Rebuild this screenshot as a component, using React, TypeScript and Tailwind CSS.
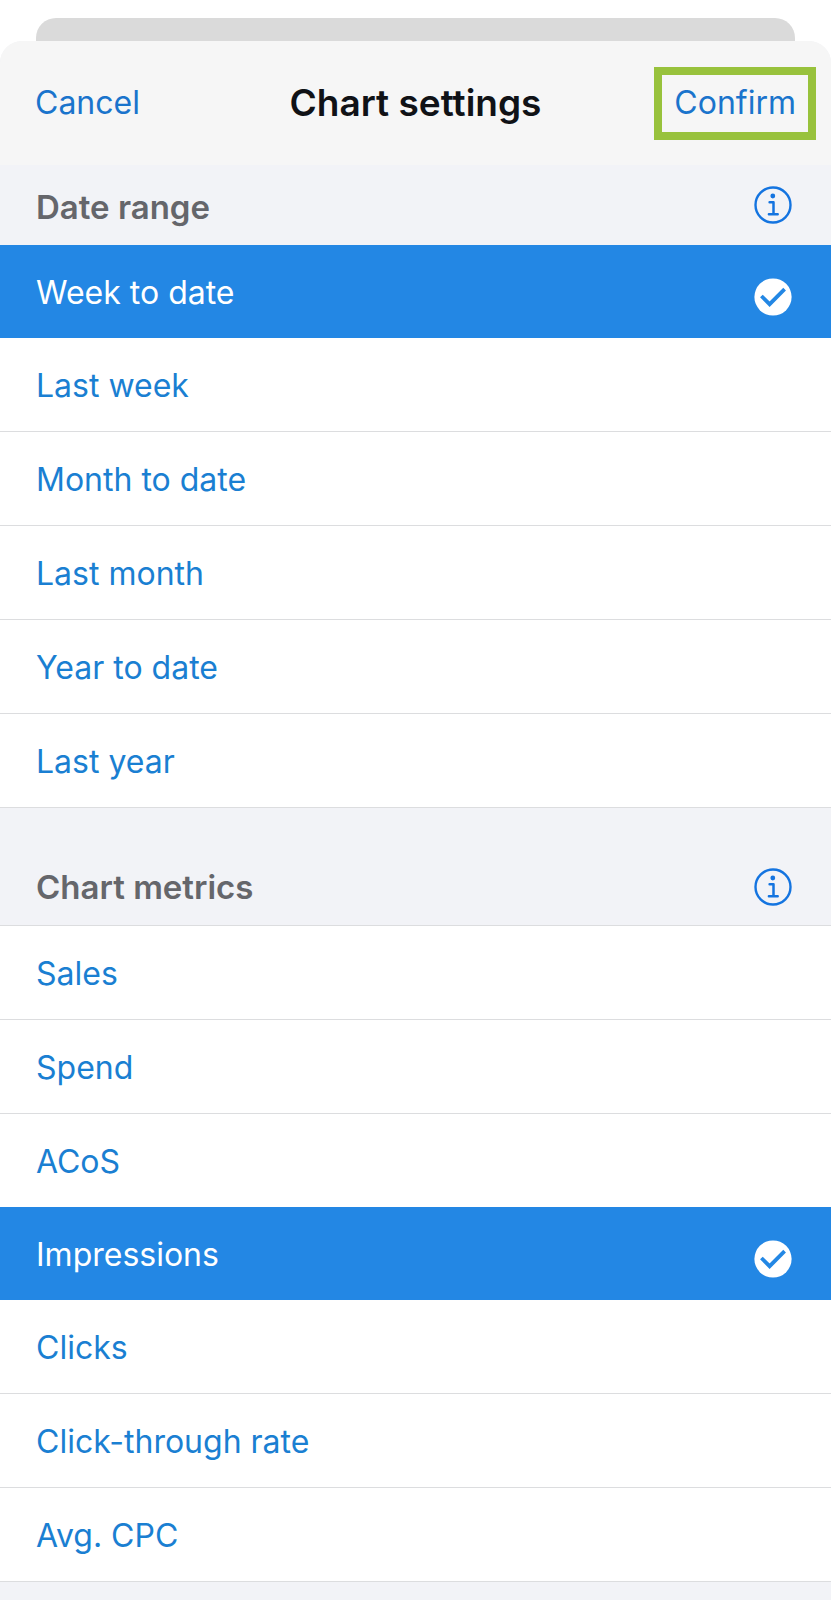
import { useState } from "react";
import clsx from "clsx";

const dateRanges = ["Week to date", "Last week", "Month to date", "Last month", "Year to date", "Last year"];
const metrics = ["Sales", "Spend", "ACoS", "Impressions", "Clicks", "Click-through rate", "Avg. CPC"];

function InfoIcon() {
  return (
    <svg className="size-[38px]" viewBox="0 0 38 38" fill="none" stroke="#1474e0" aria-hidden="true">
      <circle cx="19" cy="19" r="17.5" strokeWidth="2.4" />
      <circle cx="18.8" cy="10" r="2.4" fill="#1474e0" stroke="none" />
      <path d="M15.6 16.2h3.9v12M14.9 28.2h8.8" strokeWidth="2.5" strokeLinecap="round" strokeLinejoin="round" />
    </svg>
  );
}

function CheckIcon() {
  return (
    <svg className="mt-2.5 size-[38px]" viewBox="0 0 38 38" fill="none" aria-hidden="true">
      <circle cx="19" cy="19" r="18.6" fill="#fff" />
      <path d="M7.4 18l8.2 8.2L30.6 11.2" stroke="#2387e4" strokeWidth="3.8" />
    </svg>
  );
}

type SectionProps = {
  title: string;
  type: "radio" | "checkbox";
  options: string[];
  selected: string[];
  onSelect: (option: string) => void;
  headerClass: string;
};

function Section({ title, type, options, selected, onSelect, headerClass }: SectionProps) {
  return (
    <section>
      <div className={clsx("flex justify-between pl-9 pr-[39px]", headerClass)}>
        <h2 className="pt-1 text-[33px] leading-10 font-semibold text-[#65666b]">{title}</h2>
        <button type="button" aria-label={`About ${title}`} className="h-10">
          <InfoIcon />
        </button>
      </div>
      <div role="group" aria-label={title}>
        {options.map((option, i) => {
          const isSelected = selected.includes(option);
          const nextSelected = selected.includes(options[i + 1]);
          return (
            <label
              key={option}
              className={clsx(
                "box-content flex h-[93px] items-center justify-between pl-9 pr-[39px] text-[32px] leading-10",
                isSelected ? "bg-[#2387e4] text-white" : "bg-white text-[#1a7fd2]",
                !isSelected && !nextSelected && "border-b border-[#dcdddf]"
              )}
            >
              <input
                type={type}
                name={title}
                checked={isSelected}
                onChange={() => onSelect(option)}
                className="sr-only"
              />
              <span className="pt-0.5">{option}</span>
              {isSelected && <CheckIcon />}
            </label>
          );
        })}
      </div>
    </section>
  );
}

export default function App() {
  const [range, setRange] = useState("Week to date");
  const [chosen, setChosen] = useState(["Impressions"]);

  const toggleMetric = (metric: string) =>
    setChosen((prev) => (prev.includes(metric) ? prev.filter((m) => m !== metric) : [...prev, metric]));

  return (
    <div className="flex min-h-screen flex-col bg-white pt-[18px] font-['Inter',sans-serif]">
      <div className="mx-9 h-[23px] rounded-t-[20px] bg-[#dadada]" />
      <main className="flex-1 overflow-hidden rounded-t-[22px] bg-[#f2f3f7]">
        <header className="grid h-[124px] grid-cols-[1fr_auto_1fr] items-center bg-[#f6f6f6] px-[15px]">
          <button type="button" className="justify-self-start pl-5 text-[32px] leading-10 text-[#1a74cc]">
            Cancel
          </button>
          <h1 className="text-[37px] leading-10 font-semibold text-[#101216]">Chart settings</h1>
          <button
            type="button"
            className="h-[73px] justify-self-end border-8 border-[#98c23c] px-3 text-[32px] leading-10 text-[#1a74cc]"
          >
            Confirm
          </button>
        </header>
        <Section
          title="Date range"
          type="radio"
          options={dateRanges}
          selected={[range]}
          onSelect={setRange}
          headerClass="h-20 items-center"
        />
        <Section
          title="Chart metrics"
          type="checkbox"
          options={metrics}
          selected={chosen}
          onSelect={toggleMetric}
          headerClass="h-[118px] items-end border-b border-[#dcdddf] pb-[18px]"
        />
      </main>
    </div>
  );
}
